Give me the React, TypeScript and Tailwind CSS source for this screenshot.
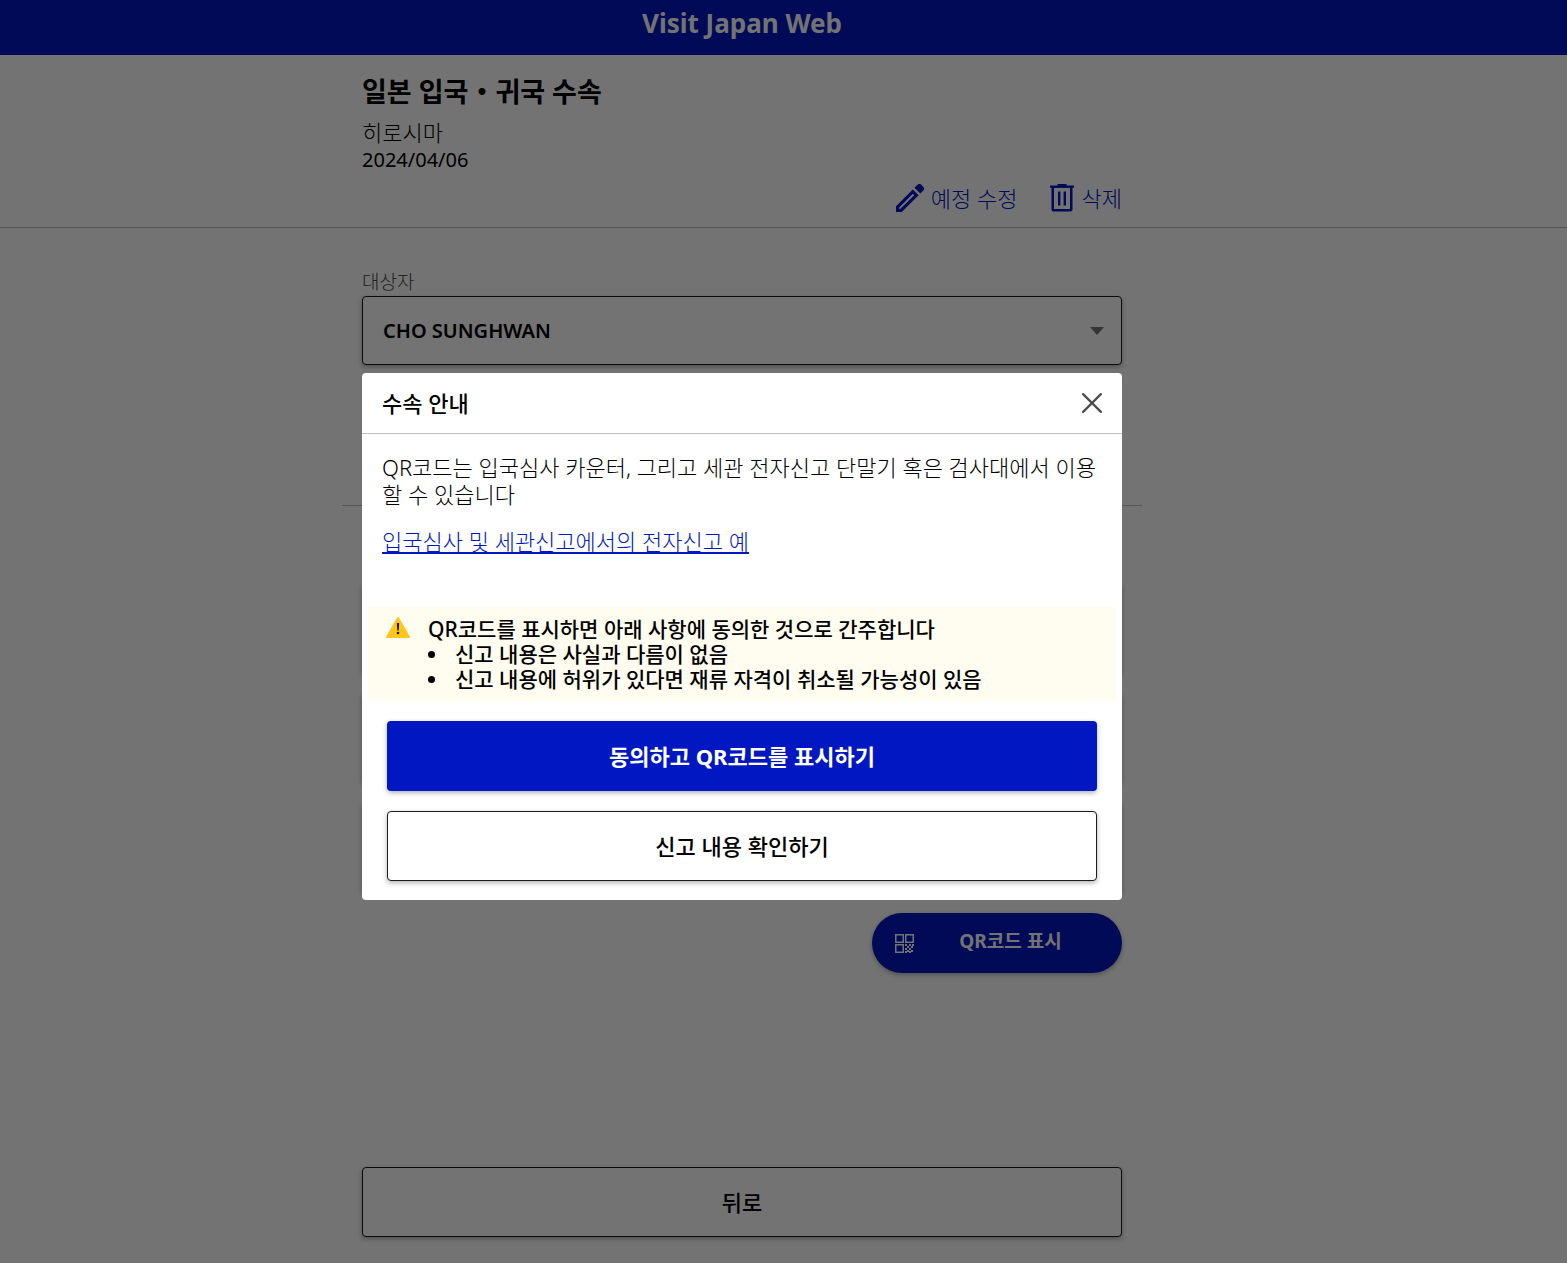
import React, { useState } from "react";

const notices = [
  "신고 내용은 사실과 다름이 없음",
  "신고 내용에 허위가 있다면 재류 자격이 취소될 가능성이 있음",
];

const procedures = ["immigration", "customs", "tax-free"];

const PencilIcon = () => (
  <svg width="28" height="28" viewBox="0 0 28 28" fill="currentColor" aria-hidden="true">
    <path
      fillRule="evenodd"
      d="M0 22.2 16.8 5.4 22.6 11.2 5.8 28H0ZM3.2 23.5V24.8H4.5L18.2 11.2 16.8 9.8Z"
    />
    <path d="M18.5 3.7 21.3.9a3 3 0 0 1 4.2 0l1.6 1.6a3 3 0 0 1 0 4.2L24.3 9.5Z" />
  </svg>
);

const TrashIcon = () => (
  <svg width="24" height="28" viewBox="0 0 24 28" fill="currentColor" aria-hidden="true">
    <path d="M7.5 0h9v1.4H24v2.4H0V1.4h7.5Z" />
    <path fillRule="evenodd" d="M1.5 3h21v22.5a2 2 0 0 1-2 2h-17a2 2 0 0 1-2-2ZM4 3.8V25h16V3.8Z" />
    <path d="M8 7.5h2.4v14H8ZM13.6 7.5H16v14h-2.4Z" />
  </svg>
);

const QrIcon = () => (
  <svg width="19" height="19" viewBox="0 0 19 19" fill="currentColor" aria-hidden="true">
    <path
      fillRule="evenodd"
      d="M0 0h9v9H0ZM1.5 1.5v6h6v-6ZM10 0h9v9h-9ZM11.5 1.5v6h6v-6ZM0 10h9v9H0ZM1.5 11.5v6h6v-6Z"
    />
    <path d="M10 10h2v2h-2ZM14 10h2v2h-2ZM12 12h2v2h-2ZM16 12h2v2h-2ZM10 14h2v2h-2ZM14 14h2v2h-2ZM12 16h2v2h-2ZM16 16h2v2h-2ZM17 10h2v2h-2ZM10 17h2v2h-2ZM14 17h2v2h-2Z" />
  </svg>
);

const WarningIcon = () => (
  <svg width="24" height="21" viewBox="0 0 24 21" aria-hidden="true">
    <path d="M12 1 23 20H1Z" fill="#ffc71e" stroke="#ffc71e" strokeWidth="2" strokeLinejoin="round" />
    <path d="M10.8 6h2.4l-.5 7.5h-1.4Z" fill="#1a1a1c" />
    <circle cx="12" cy="16" r="1.3" fill="#1a1a1c" />
  </svg>
);

const CloseIcon = () => (
  <svg width="20" height="20" viewBox="0 0 20 20" fill="none" stroke="#4d4d4d" strokeWidth="2.2" strokeLinecap="round" aria-hidden="true">
    <path d="M1.1 1.1 18.9 18.9M18.9 1.1 1.1 18.9" />
  </svg>
);

const GuideDialog = ({ onClose }: { onClose: () => void }) => {
  return (
    <div className="fixed inset-0 flex items-center justify-center bg-black/55 pt-[10px] pr-[83px]">
      <div
        role="dialog"
        aria-modal="true"
        aria-labelledby="dialog-title"
        className="w-full max-w-[760px] rounded bg-white"
      >
        {/* HEADER */}
        <div className="flex h-[61px] items-center justify-between border-b border-[#bfbfbf] px-5">
          <h2 id="dialog-title" className="text-[22px] font-medium">수속 안내</h2>
          <button type="button" aria-label="닫기" onClick={onClose}>
            <CloseIcon />
          </button>
        </div>

        {/* BODY */}
        <div className="px-5 pt-5 text-[22px] leading-[27px] font-light">
          <p className="break-all">
            QR코드는 입국심사 카운터, 그리고 세관 전자신고 단말기 혹은 검사대에서 이용할 수 있습니다
          </p>
          <a href="#example" className="mt-5 inline-block text-[#0017c1] underline">
            입국심사 및 세관신고에서의 전자신고 예
          </a>
        </div>

        <div className="mx-[6px] mt-[52px] flex gap-[18px] rounded bg-[#fffcf0] px-[18px] pt-[10px] pb-[9px] text-[21px] leading-[25px] font-medium">
          <WarningIcon />
          <div>
            <p>QR코드를 표시하면 아래 사항에 동의한 것으로 간주합니다</p>
            <ul>
              {notices.map((notice) => (
                <li key={notice} className="flex items-center gap-5 before:size-[7px] before:rounded-full before:bg-black">
                  {notice}
                </li>
              ))}
            </ul>
          </div>
        </div>

        {/* ACTIONS */}
        <div className="flex flex-col gap-5 px-[25px] pt-5 pb-[19px] text-[22px]">
          <button type="button" className="h-[70px] rounded bg-[#0017c1] font-bold text-white shadow-[0_2px_5px_rgba(0,0,0,0.3)]">
            동의하고 QR코드를 표시하기
          </button>
          <button type="button" className="h-[70px] rounded border border-[#1a1a1c] bg-white font-medium shadow-[0_2px_5px_rgba(0,0,0,0.3)]">
            신고 내용 확인하기
          </button>
        </div>
      </div>
    </div>
  );
};

const App = () => {
  const [open, setOpen] = useState(true);

  return (
    <div className="flex min-h-screen flex-col bg-white font-['Noto_Sans','Noto_Sans_CJK_KR',sans-serif] text-black">
      <header className="flex h-[55px] items-center justify-center bg-[#0017c1] pr-[83px] pb-2">
        <span className="text-[26px] font-bold text-white">Visit Japan Web</span>
      </header>

      {/* TRIP */}
      <div className="border-b border-[#bfbfbf] pr-[83px]">
        <div className="mx-auto max-w-[760px] pt-5 pb-[15px]">
          <h1 className="text-[27px] leading-[34px] font-bold">일본 입국・귀국 수속</h1>
          <div className="mt-[9px] leading-7">
            <p className="text-[22px] leading-7 font-light">히로시마</p>
            <p className="text-[20px] leading-7">2024/04/06</p>
          </div>
          <div className="mt-[10px] flex justify-end gap-8 text-[22px] leading-7 font-light text-[#0017c1]">
            <button type="button" className="flex items-center gap-[7px]">
              <PencilIcon />
              예정 수정
            </button>
            <button type="button" className="flex items-center gap-2">
              <TrashIcon />
              삭제
            </button>
          </div>
        </div>
      </div>

      <main className="flex grow flex-col pr-[83px]">
        <div className="mx-auto flex w-full max-w-[760px] grow flex-col pt-10 pb-[26px]">
          <label htmlFor="person" className="text-[19px] leading-7 font-light text-[#4d4d4d]">대상자</label>
          <div className="relative">
            <select
              id="person"
              className="h-[69px] w-full appearance-none rounded border border-[#1a1a1c] bg-white px-5 text-[20px] font-semibold shadow-[0_2px_5px_rgba(0,0,0,0.3)]"
            >
              <option>CHO SUNGHWAN</option>
            </select>
            <svg width="14" height="8" viewBox="0 0 14 8" className="pointer-events-none absolute top-[31px] right-[18px]" aria-hidden="true">
              <path d="M0 0h14L7 8Z" fill="#757575" />
            </svg>
          </div>
          <hr className="-mx-5 mt-[140px] border-[#bfbfbf]" />

          <ul className="mt-[77px] flex flex-col gap-5">
            {procedures.map((procedure) => (
              <li key={procedure} className="h-[90px] rounded bg-white shadow-[0_2px_5px_rgba(0,0,0,0.3)]" />
            ))}
          </ul>

          <button
            type="button"
            className="mt-5 flex h-[60px] w-[250px] items-center self-end rounded-full bg-[#0017c1] px-[23px] text-[19px] font-bold text-white shadow-[0_2px_5px_rgba(0,0,0,0.3)]"
          >
            <QrIcon />
            <span className="grow pb-1 pl-2 text-center">QR코드 표시</span>
          </button>

          <button
            type="button"
            className="mt-auto h-[70px] rounded border border-[#1a1a1c] bg-white text-[22px] font-medium shadow-[0_2px_5px_rgba(0,0,0,0.3)]"
          >
            뒤로
          </button>
        </div>
      </main>

      {open && <GuideDialog onClose={() => setOpen(false)} />}
    </div>
  );
};

export default App;
